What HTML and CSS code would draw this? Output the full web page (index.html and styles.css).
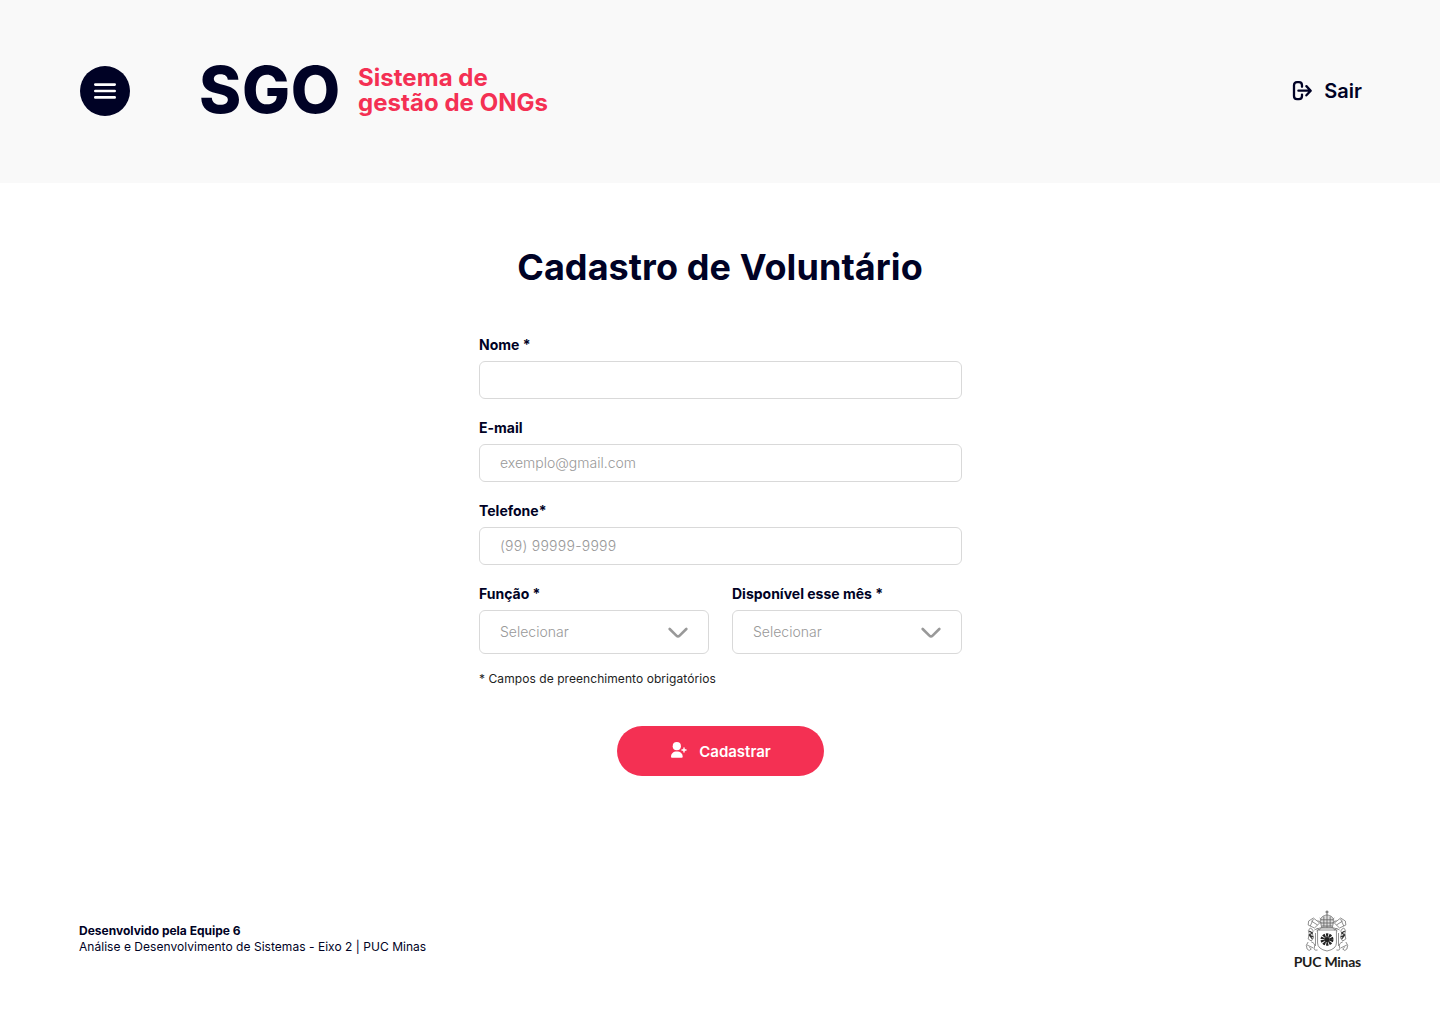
FILE: index.html
```html
<!DOCTYPE html>
<html lang="pt-BR">
<head>
<meta charset="utf-8">
<title>SGO - Cadastro de Voluntário</title>
<link rel="stylesheet" href="styles.css">
</head>
<body>
<header class="header">
  <button class="menu" type="button" aria-label="Menu">
    <svg width="22" height="16" viewBox="0 0 22 16" fill="none" stroke="#fff" stroke-width="2.6" stroke-linecap="round"><path d="M1.3 1.6h19.4M1.3 8h19.4M1.3 14.4h19.4"/></svg>
  </button>
  <div class="brand">
    <span class="brand-name">SGO</span>
    <span class="brand-text"><span>Sistema de</span><span>gestão de ONGs</span></span>
  </div>
  <a class="logout">
    <svg width="20" height="20" viewBox="0 0 20 20" fill="none" stroke="#000225" stroke-width="2.3" stroke-linecap="round" stroke-linejoin="round"><path d="M10 5.8V4.3Q10 1.2 7 1.2H5Q2 1.2 2 4.3V15.1Q2 18.2 5 18.2H7Q10 18.2 10 15.1V13.6M6.4 9.7H18.4M14.4 5.1L18.7 9.7L14.4 14.3"/></svg>
    <span>Sair</span>
  </a>
</header>
<main class="main">
  <h1 class="title">Cadastro de Voluntário</h1>
  <form class="form">
    <div class="field"><label class="label" for="nome">Nome *</label><input class="input" id="nome" type="text"></div>
    <div class="field"><label class="label" for="email">E-mail</label><input class="input" id="email" type="email" placeholder="exemplo@gmail.com"></div>
    <div class="field"><label class="label" for="telefone">Telefone*</label><input class="input input-phone" id="telefone" type="tel" placeholder="(99) 99999-9999"></div>
    <div class="row">
      <div class="field">
        <span class="label">Função *</span>
        <div class="select"><span>Selecionar</span><svg class="chevron" width="20" height="12" viewBox="0 0 20 12" fill="none" stroke="#999" stroke-width="2.6" stroke-linecap="round" stroke-linejoin="round"><path d="M1.7 2L8.4 8.6Q10 10.2 11.6 8.6L18.3 2"/></svg></div>
      </div>
      <div class="field">
        <span class="label">Disponível esse mês *</span>
        <div class="select"><span>Selecionar</span><svg class="chevron" width="20" height="12" viewBox="0 0 20 12" fill="none" stroke="#999" stroke-width="2.6" stroke-linecap="round" stroke-linejoin="round"><path d="M1.7 2L8.4 8.6Q10 10.2 11.6 8.6L18.3 2"/></svg></div>
      </div>
    </div>
    <p class="note">* Campos de preenchimento obrigatórios</p>
    <button class="submit" type="button">
      <svg width="17" height="19" viewBox="0 0 17 19" fill="#fff"><circle cx="6.8" cy="4.2" r="4.1"/><path d="M1 14.7C1 11.4 3.2 9.4 6.8 9.4S12.7 11.4 12.7 14.7Q12.7 15.8 11.6 15.8H2Q1 15.8 1 14.7Z"/><path d="M14 6v4M12 8h4" stroke="#fff" stroke-width="1.4" stroke-linecap="round"/></svg>
      <span>Cadastrar</span>
    </button>
  </form>
</main>
<footer class="footer">
  <p class="credits"><strong>Desenvolvido pela Equipe 6</strong><br>Análise e Desenvolvimento de Sistemas - Eixo 2 | PUC Minas</p>
  <div class="puc">
    <svg width="44" height="43" viewBox="0 0 42 43" preserveAspectRatio="none" fill="none" stroke="#777" stroke-width=".8" stroke-linejoin="round">
      <path d="M21 .5v5M19.5 2h3" stroke="#444"/>
      <path d="M15 13C13 8 18 5 21 5S29 8 27 13L26 18H16Z" fill="#ddd"/>
      <path d="M15 9.8h12M14.8 13h12.4M16 16h10M18 6.5v10M21 5v13M24 6.5v10" stroke="#666"/>
      <path d="M12 10.5L16 13M14 8L16 10M30 10.5L26 13M28 8L26 10M16 18L11 21M26 18L31 21"/>
      <path d="M3.5 11L8 8L14 13L9 18L3 15ZM6 11l6 4M8 9l-3 7M38.5 11L34 8L28 13L33 18L39 15ZM36 11l-6 4M34 9l3 7"/>
      <path d="M12 20H30V33Q30 39 21 41Q12 39 12 33Z" fill="#fff"/>
      <path d="M9 20Q12 17 14 20M33 20Q30 17 28 20M11 19Q21 15 31 19"/>
      <circle cx="21" cy="29.5" r="4.3" stroke="#222" stroke-width="3.8" stroke-dasharray="1.9 .8"/>
      <circle cx="21" cy="29.5" r="2.6" fill="#222" stroke="none"/>
      <path d="M5 18Q2 20 4 24L3 29L6 31L8 28L7 23Q9 20 5 18M37 18Q40 20 38 24L39 29L36 31L34 28L35 23Q33 20 37 18"/>
      <path d="M4 21l3 2-3 2 4 2M38 21l-3 2 3 2-4 2M4 25l3 4M38 25l-3 4" stroke="#333" stroke-width="1.2"/>
      <path d="M3 32Q0 35 2 39Q4 42 6 39L4 37M6 32Q10 33 9 37Q8 41 12 40M39 32Q42 35 40 39Q38 42 36 39L38 37M36 32Q32 33 33 37Q34 41 30 40M2 35l6 3M40 35l-6 3M10 23v13M32 23v13"/>
    </svg>
    <span class="puc-name">PUC Minas</span>
  </div>
</footer>
</body>
</html>
```
FILE: styles.css
```css
* { box-sizing: border-box; }
body {
  margin: 0;
  min-height: 1024px;
  display: flex;
  flex-direction: column;
  background: #fff;
  color: #000225;
  font-family: Inter, "Liberation Sans", sans-serif;
}
button, input { font-family: inherit; }
.header {
  height: 183px;
  padding: 0 78px 1px 80px;
  display: flex;
  align-items: center;
  background: #f9f9f9;
}
.menu {
  width: 50px;
  height: 50px;
  padding: 0;
  display: flex;
  align-items: center;
  justify-content: center;
  border: 0;
  border-radius: 50%;
  background: #000225;
}
.brand { display: flex; align-items: center; gap: 17px; margin-left: 69px; padding-bottom: 2px; }
.brand-name { font-size: 64px; font-weight: 800; line-height: 77px; padding-bottom: 1px; letter-spacing: .7px; }
.brand-text {
  display: flex;
  flex-direction: column;
  font-size: 24px;
  font-weight: 700;
  line-height: 25px;
  letter-spacing: .04px;
  color: #f43053;
}
.logout {
  display: flex;
  align-items: center;
  gap: 12px;
  margin-left: auto;
  font-size: 20px;
  font-weight: 600;
  line-height: 24px;
}
.main {
  flex: 1;
  display: flex;
  flex-direction: column;
  align-items: center;
  padding-top: 62px;
}
.title { margin: 0; font-size: 36px; font-weight: 700; line-height: 44px; letter-spacing: .08px; }
.form {
  width: 483px;
  margin: 47px 0 0 1px;
  display: flex;
  flex-direction: column;
  gap: 20px;
}
.field { display: flex; flex-direction: column; gap: 8px; }
.label { font-size: 14px; font-weight: 700; line-height: 17px; }
.input {
  width: 100%;
  height: 38px;
  padding: 0 20px 2px;
  border: 1px solid #d9d9d9;
  border-radius: 6px;
  background: #fff;
  font-size: 14px;
}
.input::placeholder { color: #999; font-weight: 300; opacity: 1; }
.input-phone { letter-spacing: .25px; }
.row { display: grid; grid-template-columns: 1fr 1fr; gap: 23px; }
.select {
  height: 44px;
  padding: 0 20px 2px;
  display: flex;
  align-items: center;
  justify-content: space-between;
  border: 1px solid #d9d9d9;
  border-radius: 6px;
  color: #999;
  font-size: 14px;
  font-weight: 300;
}
.chevron { margin-top: 3px; }
.note { margin: -3px 0 0; font-size: 12px; line-height: 15px; letter-spacing: .065px; color: #222; }
.submit {
  width: 207px;
  height: 50px;
  margin: 20px auto 0;
  padding: 0;
  display: flex;
  align-items: center;
  justify-content: center;
  gap: 12px;
  border: 0;
  border-radius: 25px;
  background: #f43053;
  color: #fff;
  font-size: 15px;
  font-weight: 600;
}
.footer {
  display: flex;
  align-items: center;
  justify-content: space-between;
  padding: 0 79px 54px 79px;
}
.credits { margin: 0 0 3px; font-size: 12px; line-height: 16px; letter-spacing: .035px; }
.credits strong { letter-spacing: 0; }
.puc { display: flex; flex-direction: column; align-items: center; }
.puc-name {
  font-family: Lato, "Open Sans", sans-serif;
  font-size: 14px;
  font-weight: 700;
  line-height: 17px;
  letter-spacing: -.25px;
  color: #1d1d1b;
}
```
